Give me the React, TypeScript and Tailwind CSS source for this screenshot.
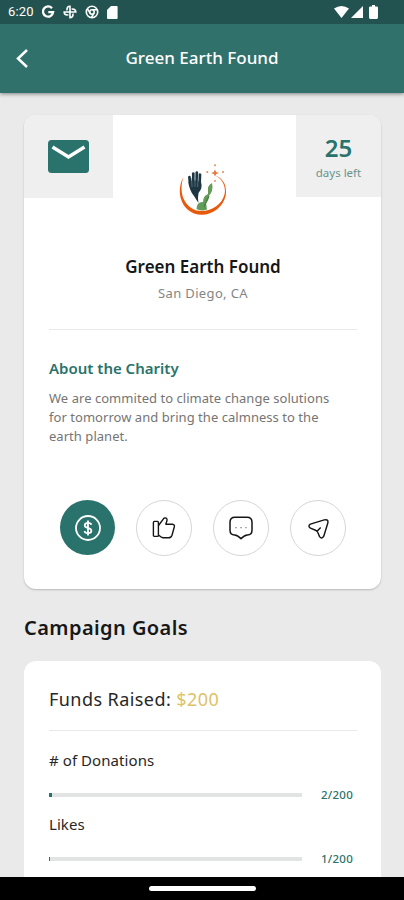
import React from "react";

interface Goal {
  label: string;
  value: number;
  total: number;
}

const goals: Goal[] = [
  { label: "# of Donations", value: 2, total: 200 },
  { label: "Likes", value: 1, total: 200 },
];

const StatusBar: React.FC = () => (
  <div className="flex h-6 items-center bg-[#235350] pl-2 pr-[26px] text-white">
    <span className="w-[27px] font-['Roboto',sans-serif] text-[13px] leading-6 tracking-[0.2px]">6:20</span>
    {/* Notification icons */}
    <svg className="ml-[6px] h-[14px] w-[14px]" viewBox="0 0 14 14" fill="none" stroke="currentColor" strokeWidth="2.3">
      <path d="M11 3.3A5.1 5.1 0 1 0 12.1 7.2H7.3" />
    </svg>
    <svg className="ml-2 h-[14px] w-[14px]" viewBox="0 0 14 14" fill="none" stroke="currentColor" strokeWidth="1.6">
      <path d="M7 7V1.2A3 3 0 0 0 4 4.2Q4 5 4.4 5.3" />
      <path d="M7 7h5.8a3 3 0 0 0-3-3Q9 4 8.7 4.4" />
      <path d="M7 7v5.8a3 3 0 0 0 3-3Q10 9 9.6 8.7" />
      <path d="M7 7H1.2a3 3 0 0 0 3 3Q5 10 5.3 9.6" />
    </svg>
    <svg className="ml-2 h-[14px] w-[14px]" viewBox="0 0 14 14" fill="none" stroke="currentColor" strokeWidth="1.6">
      <circle cx="7" cy="7" r="5.7" />
      <circle cx="7" cy="7" r="2.2" />
      <path d="M7 4.8h5M5.1 8.2 2.6 4.1M8.9 8.2l-2.4 4.3" />
    </svg>
    <svg className="ml-2 h-[13px] w-[11px]" viewBox="0 0 11 13" fill="currentColor">
      <path d="M4 0h5.6q1 0 1 1v11q0 1-1 1H1q-1 0-1-1V4z" />
    </svg>
    {/* System icons */}
    <div className="ml-auto flex items-center">
      <svg className="h-[12px] w-[15px]" viewBox="0 0 15 12" fill="currentColor">
        <path d="M0 2.6Q7.5-2.6 15 2.6L7.5 12z" />
      </svg>
      <svg className="ml-[2px] h-[12px] w-[12px]" viewBox="0 0 12 12" fill="currentColor">
        <path d="M12 0v12H0z" />
      </svg>
      <svg className="ml-[6px] h-[14px] w-[9px]" viewBox="0 0 9 14" fill="currentColor">
        <path d="M3 0h3v1.4h1.7q1.3 0 1.3 1.3v9.9q0 1.4-1.3 1.4H1.3Q0 14 0 12.6V2.7q0-1.3 1.3-1.3H3z" />
      </svg>
    </div>
  </div>
);

const CharityLogo: React.FC = () => (
  <svg className="h-[54px] w-[50px]" viewBox="0 0 50 54" fill="none">
    <path
      d="M5.5 14C-2 27 2 45 16 50.5C30 55.5 45 46 47.8 32C49 22 45 15 37 12.4C45 16 48 24 46.6 31C44 43 30 50.5 17.5 47.2C4 42 1 27 5.5 14Z"
      fill="#e8590c"
    />
    <g stroke="#1d3642" strokeWidth="2.7" strokeLinecap="round">
      <path d="M12.2 22 11.4 14" />
      <path d="M15.3 20V10.5" />
      <path d="M18.6 20 18.8 9.5" />
      <path d="M21.6 21 22 11.5" />
    </g>
    <path d="M10.5 18.5Q16 16 23 19Q25 25 20.5 30Q19.5 34 20.5 40L16 33Q11 27 10.5 18.5Z" fill="#1d3642" />
    <path d="m13.4 15 .7 9m2.8-10 .1 10m3.2-10-.6 10" stroke="#7690a0" strokeWidth=".6" />
    <path d="M19 43Q20 39 25 39Q25 33 30 31Q32 36 28 40L29 46.5Q23 48.5 18.5 46Z" fill="#649b58" />
    <path d="M30 30Q29 22 34 20Q36 28 30 34Z" fill="#649b58" />
    <path d="M26 44 31 33" stroke="#477c45" strokeWidth="1.2" />
    <path d="m37 6.5 1.2 2.4 2.8 1-2.8 1L37 13.5l-1.2-2.6-2.8-1 2.8-1z" fill="#e9793b" />
    <path d="M37 1.2v2M29.3 8v2M45 8v2M37 17v1.8" stroke="#e99362" strokeWidth="1.7" />
  </svg>
);

const ActionButtons: React.FC = () => (
  <div className="mt-[54px] flex justify-between px-[11px]">
    <button className="flex h-[55px] w-[55px] items-center justify-center rounded-full bg-[#29736c] text-white">
      <svg className="h-[28px] w-[28px]" viewBox="0 0 28 28" fill="none" stroke="currentColor" strokeWidth="1.8">
        <circle cx="14" cy="14" r="12" />
        <path d="M17.4 10.8Q17 8.9 14 8.9T10.7 11.3Q10.7 13.2 14 14T17.4 16.7Q17.4 19.1 14 19.1T10.6 17M14 6.5v15" />
      </svg>
    </button>
    <button className="flex h-[56px] w-[56px] items-center justify-center rounded-full border border-[#d5d5d5] text-[#151515]">
      <svg className="h-[24px] w-[24px]" viewBox="0 0 24 24" fill="none" stroke="currentColor" strokeWidth="1.4" strokeLinejoin="round">
        <rect x="1.4" y="5.4" width="5" height="15" rx="1" />
        <path d="M6.5 9.5 12 2.1Q15.5 1.3 15 4.5L13.8 8.2H20.5Q23 8.5 22.3 11L20 19.2Q19.2 21.8 16.5 21.8H11Q9.8 21.8 6.5 19" />
      </svg>
    </button>
    <button className="flex h-[56px] w-[56px] items-center justify-center rounded-full border border-[#d5d5d5] text-[#151515]">
      <svg className="h-[24px] w-[24px]" viewBox="0 0 24 24" fill="none" stroke="currentColor" strokeWidth="1.5" strokeLinejoin="round">
        <path d="M6 1.2h12q5 0 5 5v8q0 4.6-4.6 4.8Q15.5 19.1 12 22.6 8.5 19.1 5.6 19 1 18.8 1 14.2v-8q0-5 5-5z" />
        <path d="M6.3 11.6h1.4m3.6 0h1.4m3.6 0h1.4" stroke="#888" strokeWidth="1.2" />
      </svg>
    </button>
    <button className="flex h-[56px] w-[56px] items-center justify-center rounded-full border border-[#d5d5d5] text-[#151515]">
      <svg className="h-[23px] w-[23px]" viewBox="0 0 24 24" fill="none" stroke="currentColor" strokeWidth="1.5" strokeLinejoin="round">
        <path d="M3.5 7.5 18 3Q22.5 2 21.8 6L17.5 20Q15.5 23.5 13.1 20.5L11.2 15.9Q10.7 14.5 8.9 13.8L3.6 11.6Q.5 9.5 3.5 7.5ZM10.5 14.8l3.8-3.9" />
      </svg>
    </button>
  </div>
);

const CharityCard: React.FC = () => (
  <section className="h-[474px] overflow-hidden rounded-xl bg-white shadow-[0_1px_2px_rgba(0,0,0,0.22)]">
    <div className="flex h-[126px] items-start justify-between">
      <div className="flex h-[83px] w-[89px] items-center justify-center bg-[#efefef]">
        <svg className="h-[33px] w-[41px]" viewBox="0 0 41 33" fill="none">
          <rect width="41" height="33" rx="3.5" fill="#29736c" />
          <path d="m4.5 7 16 10 16-10" stroke="#fff" strokeWidth="3.4" />
        </svg>
      </div>
      <div className="mr-[3px] mt-[48px]">
        <CharityLogo />
      </div>
      <div className="h-[82px] w-[85px] bg-[#efefef] pt-[18px] text-center text-[#29736c]">
        <div className="text-[24px] font-semibold leading-[30px]">25</div>
        <div className="mt-px text-[11.5px] leading-[18px] text-[#67938e]">days left</div>
      </div>
    </div>
    <div className="pl-[25px] pr-6">
      <h2 className="mt-[14px] text-center text-[17px] font-semibold leading-6 text-[#171717]">Green Earth Found</h2>
      <p className="mt-1 text-center text-[13px] leading-5 tracking-[0.35px] text-[#858585]">San Diego, CA</p>
      <hr className="mt-[26px] border-[#e9e9e9]" />
      <h3 className="mt-[26px] text-[15px] font-semibold leading-6 text-[#29736c]">About the Charity</h3>
      <p className="mt-[9px] whitespace-nowrap text-[13px] leading-[19px] tracking-[0.04px] text-[#757575]">
        We are commited to climate change solutions
        <br />
        for tomorrow and bring the calmness to the
        <br />
        earth planet.
      </p>
      <ActionButtons />
    </div>
  </section>
);

const GoalRow: React.FC<{ goal: Goal }> = ({ goal }) => (
  <div className="h-16">
    <div className="text-[15px] leading-6 tracking-[0.07px] text-[#272727]">{goal.label}</div>
    <div className="mt-[13px] flex h-5 items-center">
      <div className="h-1 w-[253px] bg-[#e1e4e3]">
        <div className="h-1 bg-[#29736c]" style={{ width: `${(goal.value / goal.total) * 100}%` }} />
      </div>
      <span className="ml-[19px] text-[11.5px] font-medium tracking-[0.25px] text-[#29736c]">
        {goal.value}/{goal.total}
      </span>
    </div>
  </div>
);

const App: React.FC = () => {
  return (
    <div className="flex h-[900px] w-[404px] flex-col overflow-hidden bg-[#eaeaea] font-['Noto_Sans',sans-serif]">
      <header className="z-10 shrink-0 shadow-[0_1px_4px_rgba(0,0,0,0.45)]">
        <StatusBar />
        <div className="grid h-[69px] grid-cols-[40px_1fr_40px] items-center bg-[#31716c] text-white">
          <svg className="ml-4 h-[19px] w-[12px]" viewBox="0 0 12 19" fill="none" stroke="currentColor" strokeWidth="2.5">
            <path d="m11 1-9 8.5L11 18" />
          </svg>
          <h1 className="pb-0.5 text-center text-[17px] font-medium">Green Earth Found</h1>
        </div>
      </header>

      <main className="min-h-0 flex-1 overflow-hidden pl-6 pr-[23px] pt-[22px]">
        <CharityCard />
        <h2 className="mt-[25px] text-[20px] font-semibold leading-7 tracking-[0.43px] text-[#171717]">Campaign Goals</h2>
        <section className="mt-[19px] h-[300px] rounded-xl bg-white pl-[25px] pr-6 pt-[23px]">
          <div className="text-[18px] leading-[30px] tracking-[0.43px] text-[#272727]">
            Funds Raised: <span className="text-[#dec268]">$200</span>
          </div>
          <hr className="mb-[17px] mt-4 border-[#e9e9e9]" />
          {goals.map((goal) => (
            <GoalRow key={goal.label} goal={goal} />
          ))}
        </section>
      </main>

      {/* Gesture navigation */}
      <footer className="flex h-[23px] shrink-0 items-center justify-center bg-black">
        <div className="h-[5px] w-[107px] rounded-full bg-white" />
      </footer>
    </div>
  );
};

export default App;
